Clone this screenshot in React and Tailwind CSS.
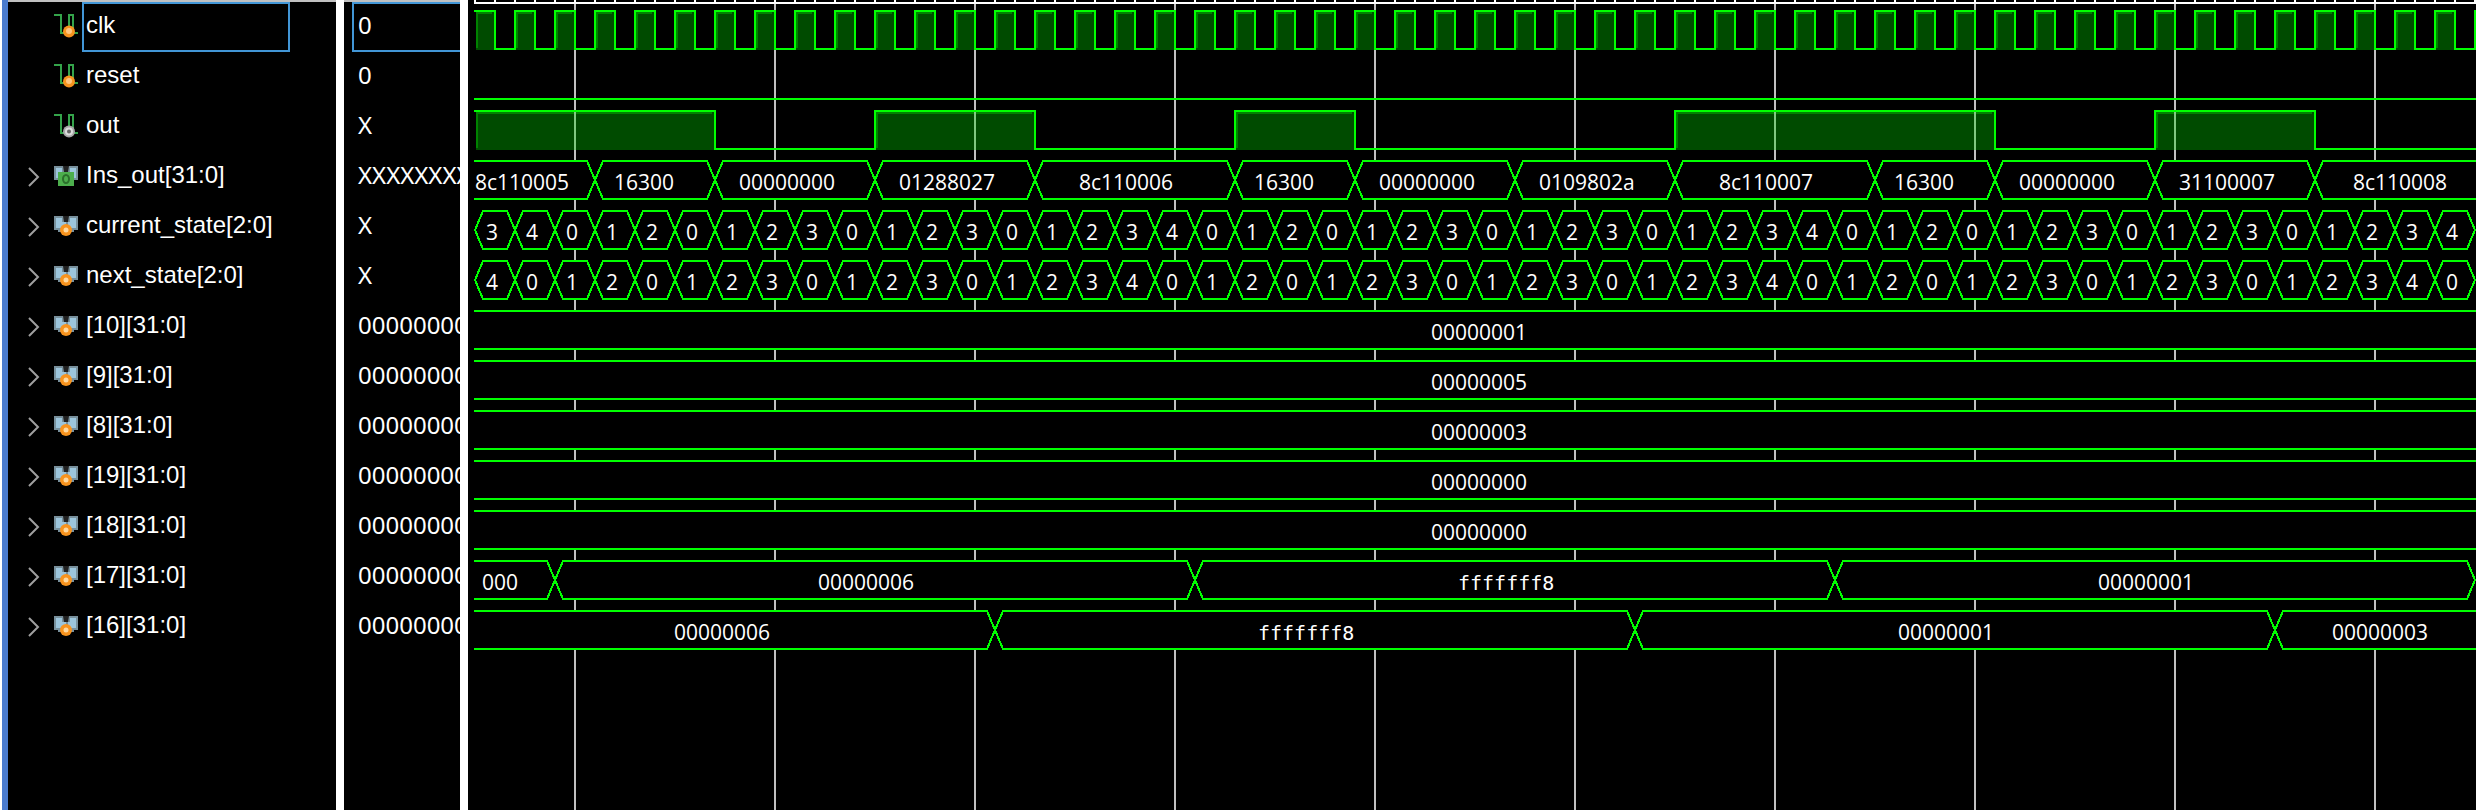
import React from "react";

const ROW = 50;
const GREEN = "#00ff00";
const START = 7;
const END = 4000;

const UNKNOWN = "XXXXXXXX";
const ZEROS = "00000000";

const cellsFrom = (digits, first) =>
  digits.split("").map((d, i) => ({ from: first + i * 40, to: first + (i + 1) * 40, text: d, at: first + i * 40 + 11 }));

const CURRENT = "34012012301230123401201230123012340120123012301234";
const NEXT = "40120123012301234012012301230123401201230123012340";

const signals = [
  { name: "clk", value: "0", icon: "input", selected: true, type: "clock" },
  { name: "reset", value: "0", icon: "input", type: "low" },
  {
    name: "out", value: "X", icon: "output", type: "level",
    highs: [[7, 247], [407, 567], [767, 887], [1207, 1527], [1687, 1847]],
  },
  {
    name: "Ins_out[31:0]", value: UNKNOWN, icon: "busOut", type: "bus",
    segments: [
      { from: -60, to: 127, text: "8c110005", at: 7 },
      { from: 127, to: 247, text: "16300", at: 146 },
      { from: 247, to: 407, text: "00000000", at: 271 },
      { from: 407, to: 567, text: "01288027", at: 431 },
      { from: 567, to: 767, text: "8c110006", at: 611 },
      { from: 767, to: 887, text: "16300", at: 786 },
      { from: 887, to: 1047, text: "00000000", at: 911 },
      { from: 1047, to: 1207, text: "0109802a", at: 1071 },
      { from: 1207, to: 1407, text: "8c110007", at: 1251 },
      { from: 1407, to: 1527, text: "16300", at: 1426 },
      { from: 1527, to: 1687, text: "00000000", at: 1551 },
      { from: 1687, to: 1847, text: "31100007", at: 1711 },
      { from: 1847, to: END, text: "8c110008", at: 1885 },
    ],
  },
  { name: "current_state[2:0]", value: "X", icon: "bus", type: "bus", segments: cellsFrom(CURRENT, 7) },
  { name: "next_state[2:0]", value: "X", icon: "bus", type: "bus", segments: cellsFrom(NEXT, 7) },
  { name: "[10][31:0]", value: ZEROS, icon: "bus", type: "bus", segments: [{ from: -60, to: END, text: "00000001", at: 963 }] },
  { name: "[9][31:0]", value: ZEROS, icon: "bus", type: "bus", segments: [{ from: -60, to: END, text: "00000005", at: 963 }] },
  { name: "[8][31:0]", value: ZEROS, icon: "bus", type: "bus", segments: [{ from: -60, to: END, text: "00000003", at: 963 }] },
  { name: "[19][31:0]", value: ZEROS, icon: "bus", type: "bus", segments: [{ from: -60, to: END, text: "00000000", at: 963 }] },
  { name: "[18][31:0]", value: ZEROS, icon: "bus", type: "bus", segments: [{ from: -60, to: END, text: "00000000", at: 963 }] },
  {
    name: "[17][31:0]", value: ZEROS, icon: "bus", type: "bus",
    segments: [
      { from: -60, to: 87, text: "000", at: 14 },
      { from: 87, to: 727, text: "00000006", at: 350 },
      { from: 727, to: 1367, text: "fffffff8", at: 990 },
      { from: 1367, to: 2007, text: "00000001", at: 1630 },
    ],
  },
  {
    name: "[16][31:0]", value: ZEROS, icon: "bus", type: "bus",
    segments: [
      { from: -60, to: 527, text: "00000006", at: 206 },
      { from: 527, to: 1167, text: "fffffff8", at: 790 },
      { from: 1167, to: 1807, text: "00000001", at: 1430 },
      { from: 1807, to: END, text: "00000003", at: 1864 },
    ],
  },
];

function SignalIcon({ kind }) {
  if (kind === "input" || kind === "output") {
    const input = kind === "input";
    return (
      <svg viewBox="0 0 24 24" className="mb-0.5 size-6 shrink-0" aria-hidden="true">
        <path d="M0 1H7V19H11M15 14V1H19V19H24" fill="none" stroke="#34a34a" strokeWidth="2" />
        <circle cx="15" cy="17.5" r="6" fill={input ? "#f7931e" : "#a8a8a8"} />
        {input ? (
          <circle cx="15" cy="17" r="3" fill="#ffc680" />
        ) : (
          <circle cx="15" cy="17.5" r="3" fill="#666" stroke="#dcdcdc" strokeWidth="2" />
        )}
      </svg>
    );
  }
  return (
    <svg viewBox="0 0 24 24" className="mb-0.5 size-6 shrink-0" aria-hidden="true">
      <path d="M0 2H10V6H14V2H24V16H20V18H4V16H0Z" fill="#78909c" />
      <path d="M2 4H8V8H12V14H2ZM16 4H22V14H14V8H16Z" fill="#9cc5dc" />
      <path d="M9 2H15L14 8H10Z" fill="#222" />
      {kind === "busOut" ? (
        <>
          <path d="M4 8H20V22H4Z" fill="#4cae4c" />
          <ellipse cx="12" cy="15" rx="3" ry="4" fill="none" stroke="#2b6e2b" strokeWidth="2" />
        </>
      ) : (
        <>
          <circle cx="12" cy="16" r="6" fill="#f7931e" />
          <circle cx="12" cy="16" r="2.5" fill="#ffd9a0" />
        </>
      )}
    </svg>
  );
}

function Pulse({ from, to, next, y, first }) {
  return (
    <g>
      <rect x={from + 1} y={y + 10} width={to - from - 2} height={38} fill="#004b00" />
      <path d={`M${from + 2} ${y + 46}V${y + 11}H${to - 3}`} fill="none" stroke="#008200" strokeWidth="2" />
      <path
        d={first ? `M${from - 1} ${y + 9}H${to}V${y + 47}H${next}` : `M${from} ${y + 48}V${y + 9}H${to}V${y + 47}H${next}`}
        fill="none"
        stroke={GREEN}
        strokeWidth="2"
      />
    </g>
  );
}

function Clock({ y }) {
  const pulses = Array.from({ length: 100 }, (_, i) => START + i * 40);
  return pulses.map((x) => <Pulse key={x} from={x} to={x + 20} y={y} next={x + 40} first={x === START} />);
}

function Level({ highs, y }) {
  return highs.map(([from, to], i) => (
    <Pulse key={from} from={from} to={to} y={y} first={i === 0} next={i + 1 < highs.length ? highs[i + 1][0] : END} />
  ));
}

function Bus({ segments, y }) {
  const t = y + 9;
  const m = y + 28;
  const b = y + 47;
  return segments.map(({ from, to, text, at }) => (
    <g key={from}>
      <path
        d={`M${from} ${m}L${from + 8} ${t}H${to - 8}L${to} ${m}L${to - 8} ${b}H${from + 8}Z`}
        fill="#000"
        stroke={GREEN}
        strokeWidth="2"
        shapeRendering="crispEdges"
      />
      <text
        x={at}
        y={y + 38}
        fill="#fff"
        className={
          text.startsWith("f")
            ? "font-['DejaVu_Sans_Mono',monospace] text-[20px]"
            : "font-['Open_Sans',sans-serif] text-[21px] font-medium"
        }
      >
        {text}
      </text>
    </g>
  ));
}

function Waveforms() {
  const ticks = Array.from({ length: 200 }, (_, i) => START + i * 20);
  const grid = Array.from({ length: 20 }, (_, i) => 107 + i * 200);
  return (
    <svg className="block size-full" role="img" aria-label="Waveforms">
      <defs>
        <clipPath id="plot">
          <rect x="6" y="0" width="100%" height="100%" />
        </clipPath>
      </defs>
      <g clipPath="url(#plot)">
        <rect x={START - 1} y="2" width={END} height="2" fill="#fff" />
        {ticks.map((x) => (
          <rect key={x} x={x - 1} y="0" width="2" height="2" fill="#fff" />
        ))}
        {grid.map((x) => (
          <rect key={x} x={x - 1} y="4" width="2" height="100%" fill="#c0c0c0" />
        ))}
        {signals.map((s, i) => {
          const y = 2 + i * ROW;
          if (s.type === "clock") return <Clock key={s.name} y={y} />;
          if (s.type === "low") return <rect key={s.name} x={START - 1} y={y + 46} width={END} height="2" fill={GREEN} />;
          if (s.type === "level")
            return (
              <g key={s.name}>
                <Level highs={s.highs} y={y} />
                {grid
                  .filter((x) => s.highs.some(([a, b]) => x > a && x < b))
                  .map((x) => (
                    <rect key={x} x={x - 1} y={y + 10} width="2" height="38" fill="#80c880" />
                  ))}
              </g>
            );
          return <Bus key={s.name} segments={s.segments} y={y} />;
        })}
      </g>
    </svg>
  );
}

export default function App() {
  return (
    <main className="flex h-screen overflow-hidden bg-white text-2xl text-white">
      <section aria-label="Signals" className="ml-0.5 w-[334px] shrink-0 border-l-6 border-[#4a7bce] bg-black">
        <div className="h-0.5 bg-[#c0c0c0]" />
        <ul className="font-['Liberation_Sans',Arial,sans-serif]">
          {signals.map((s) => (
            <li key={s.name} className="flex h-[50px] items-center pr-[46px] pl-5">
              {s.icon.startsWith("bus") ? (
                <button type="button" aria-label={`Expand ${s.name}`} className="w-[26px] shrink-0">
                  <svg viewBox="0 0 12 20" className="h-5 w-3" aria-hidden="true">
                    <path d="M1 1L10 10L1 19" fill="none" stroke="#a0a0a0" strokeWidth="2" />
                  </svg>
                </button>
              ) : (
                <span className="w-[26px] shrink-0" />
              )}
              <SignalIcon kind={s.icon} />
              <span
                className={`ml-1 h-[50px] flex-1 border-2 pl-0.5 leading-[42px] whitespace-nowrap ${s.selected ? "border-[#4296d6]" : "border-transparent"}`}
              >
                {s.name}
              </span>
            </li>
          ))}
        </ul>
      </section>
      <section aria-label="Values" className="ml-2 w-[116px] shrink-0 overflow-hidden bg-black">
        <div className="h-0.5 bg-[#c0c0c0]" />
        <ul className="font-['Noto_Sans',sans-serif]">
          {signals.map((s) => (
            <li
              key={s.name}
              className={`ml-2 h-[50px] border-2 border-r-0 pl-1 leading-[42px] whitespace-nowrap ${s.selected ? "border-[#4296d6]" : "border-transparent"}`}
            >
              {s.value}
            </li>
          ))}
        </ul>
      </section>
      <section className="ml-2 min-w-0 flex-1 overflow-hidden bg-black">
        <Waveforms />
      </section>
    </main>
  );
}
